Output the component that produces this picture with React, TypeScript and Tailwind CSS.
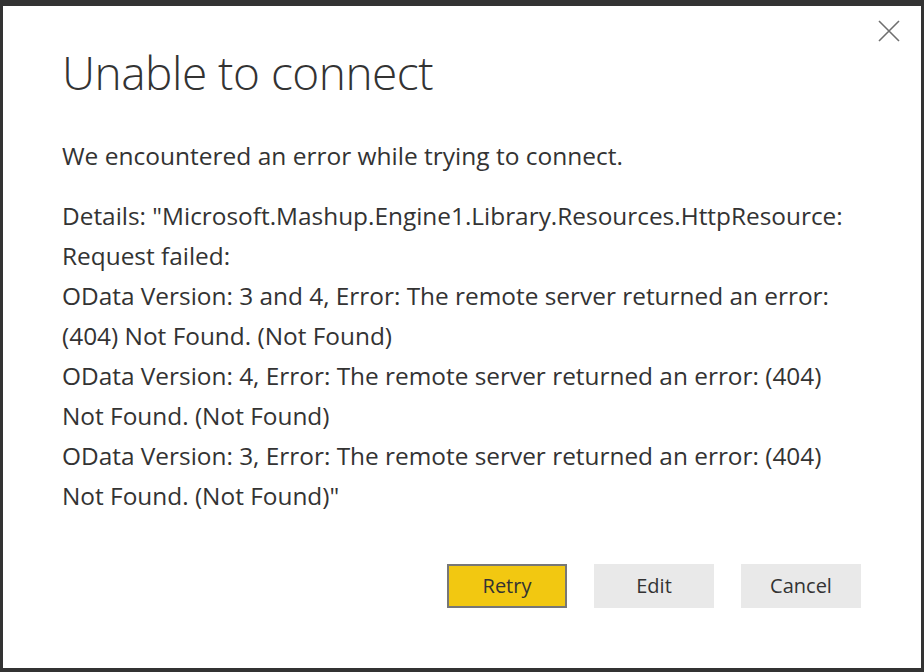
const detailLines = [
  'Details: "Microsoft.Mashup.Engine1.Library.Resources.HttpResource:',
  "Request failed:",
  "OData Version: 3 and 4, Error: The remote server returned an error:",
  "(404) Not Found. (Not Found)",
  "OData Version: 4, Error: The remote server returned an error: (404)",
  "Not Found. (Not Found)",
  "OData Version: 3, Error: The remote server returned an error: (404)",
  'Not Found. (Not Found)"',
];

function CloseIcon() {
  return (
    <svg width="22" height="22" viewBox="0 0 22 22" fill="none">
      <path d="M1 1L21 21M21 1L1 21" stroke="#6f6f6f" strokeWidth="1.6" />
    </svg>
  );
}

export default function App() {
  return (
    <div className="w-[924px] h-[672px] bg-white border-[#333333] border-t-[6px] border-x-[3px] border-b-[4px] font-['Open_Sans','Noto_Sans',sans-serif] text-[#333333]">
      <div className="flex justify-end pt-[14px] pr-[21px]">
        <button type="button" className="w-[22px] h-[22px]">
          <CloseIcon />
        </button>
      </div>
      <div className="pl-[59px]">
        <h1 className="mt-[2px] text-[46px] leading-[56px] font-light tracking-[-0.5px]">
          Unable to connect
        </h1>
        <p className="mt-[42px] text-[24.5px] leading-[28px]">
          We encountered an error while trying to connect.
        </p>
        <div className="mt-[26px] text-[24.4px] leading-[40px]">
          {detailLines.map((line, i) => (
            <div key={i} className="whitespace-nowrap">
              {line}
            </div>
          ))}
        </div>
        <div className="mt-[48px] flex justify-end gap-[27px] pr-[60px]">
          <button
            type="button"
            className="w-[120px] h-[44px] bg-[#f2c811] border-2 border-[#777777] text-[20px]"
          >
            Retry
          </button>
          <button
            type="button"
            className="w-[120px] h-[44px] bg-[#e9e9e9] text-[20px]"
          >
            Edit
          </button>
          <button
            type="button"
            className="w-[120px] h-[44px] bg-[#e9e9e9] text-[20px]"
          >
            Cancel
          </button>
        </div>
      </div>
    </div>
  );
}
